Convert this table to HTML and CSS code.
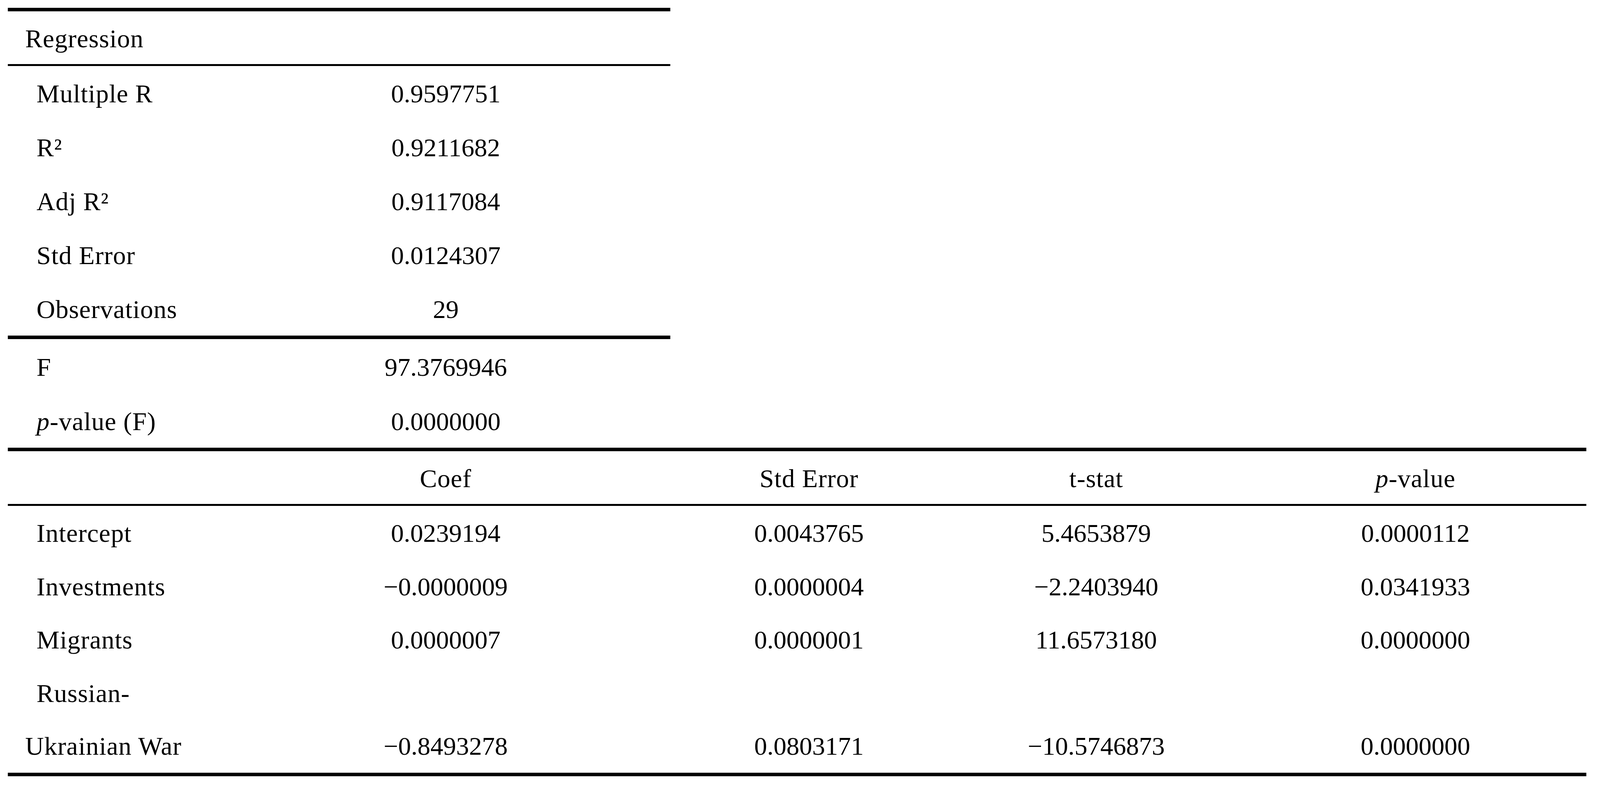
FILE: index.html
```html
<!DOCTYPE html>
<html lang="en">
<head>
<meta charset="utf-8">
<title>Regression results</title>
<link rel="stylesheet" href="styles.css">
</head>
<body>
<div class="page">
  <table class="tbl summary">
    <colgroup><col class="s-label"><col class="s-value"></colgroup>
    <thead>
      <tr class="head-row">
        <th class="title txt" colspan="2">Regression</th>
      </tr>
    </thead>
    <tbody class="fit">
      <tr><td class="lbl txt">Multiple R</td><td class="num">0.9597751</td></tr>
      <tr><td class="lbl txt">R²</td><td class="num">0.9211682</td></tr>
      <tr><td class="lbl txt">Adj R²</td><td class="num">0.9117084</td></tr>
      <tr><td class="lbl txt">Std Error</td><td class="num">0.0124307</td></tr>
      <tr class="last"><td class="lbl txt">Observations</td><td class="num">29</td></tr>
    </tbody>
    <tbody class="ftest">
      <tr><td class="lbl txt">F</td><td class="num">97.3769946</td></tr>
      <tr><td class="lbl txt"><i>p</i>-value (F)</td><td class="num">0.0000000</td></tr>
    </tbody>
  </table>

  <table class="tbl coefs">
    <colgroup>
      <col class="c-label"><col class="c-coef"><col class="c-se"><col class="c-t"><col class="c-p">
    </colgroup>
    <thead>
      <tr class="head-row">
        <th class="blank"></th>
        <th class="txt">Coef</th>
        <th class="txt">Std Error</th>
        <th class="txt">t-stat</th>
        <th class="txt"><i>p</i>-value</th>
      </tr>
    </thead>
    <tbody>
      <tr><td class="lbl txt">Intercept</td><td class="num">0.0239194</td><td class="num">0.0043765</td><td class="num">5.4653879</td><td class="num">0.0000112</td></tr>
      <tr><td class="lbl txt">Investments</td><td class="num">−0.0000009</td><td class="num">0.0000004</td><td class="num">−2.2403940</td><td class="num">0.0341933</td></tr>
      <tr><td class="lbl txt">Migrants</td><td class="num">0.0000007</td><td class="num">0.0000001</td><td class="num">11.6573180</td><td class="num">0.0000000</td></tr>
      <tr class="double"><td class="lbl txt">Russian-<br>Ukrainian War</td><td class="num">−0.8493278</td><td class="num">0.0803171</td><td class="num">−10.5746873</td><td class="num">0.0000000</td></tr>
    </tbody>
  </table>
</div>
</body>
</html>
```

FILE: styles.css
```css
html, body {
  margin: 0;
  padding: 0;
  background: #ffffff;
}

body {
  font-family: "Liberation Serif", "Times New Roman", serif;
  font-size: 66px;
  color: #000000;
}

/* layout widths are proportional to the page width (reference: 4412px wide) */
.page {
  padding: 20px 0 0 0.5%;
}

.tbl {
  border-collapse: separate;
  border-spacing: 0;
  table-layout: fixed;
  font-size: 66px;
}

.summary {
  width: 41.6%;
  border-top: 9px solid #000;
}

.coefs {
  width: 99.14%;
  border-top: 9px solid #000;
  border-bottom: 9px solid #000;
}

.s-label { width: 32.2%; }
.s-value { width: 67.8%; }

.c-label { width: 13.51%; }
.c-coef { width: 28.44%; }
.c-se { width: 17.6%; }
.c-t { width: 18.8%; }
.c-p { width: 21.65%; }

th, td {
  padding: 0;
  font-weight: normal;
  white-space: nowrap;
}

.txt {
  letter-spacing: 1px;
}

.head-row th {
  padding-top: 5px;
  line-height: 130px;
  height: 130px;
  text-align: center;
  vertical-align: top;
  border-bottom: 5px solid #000;
}

.head-row .title {
  text-align: left;
  padding-left: 44px;
}

.fit td {
  padding-top: 4px;
  line-height: 134px;
  height: 134px;
  vertical-align: top;
}

.fit .last td {
  border-bottom: 9px solid #000;
}

.ftest td {
  padding-top: 4px;
  line-height: 135px;
  height: 135px;
  vertical-align: top;
}

.coefs tbody td {
  padding-top: 4px;
  line-height: 132.6px;
  height: 132.6px;
  vertical-align: top;
}

.lbl {
  text-align: left;
  padding-left: 44px;
  text-indent: 29px;
}

.num {
  text-align: center;
}

.coefs tbody .double td {
  padding-top: 2px;
  line-height: 135.6px;
  height: 271.2px;
  vertical-align: bottom;
}

.coefs tbody .double .lbl {
  white-space: normal;
}
```
